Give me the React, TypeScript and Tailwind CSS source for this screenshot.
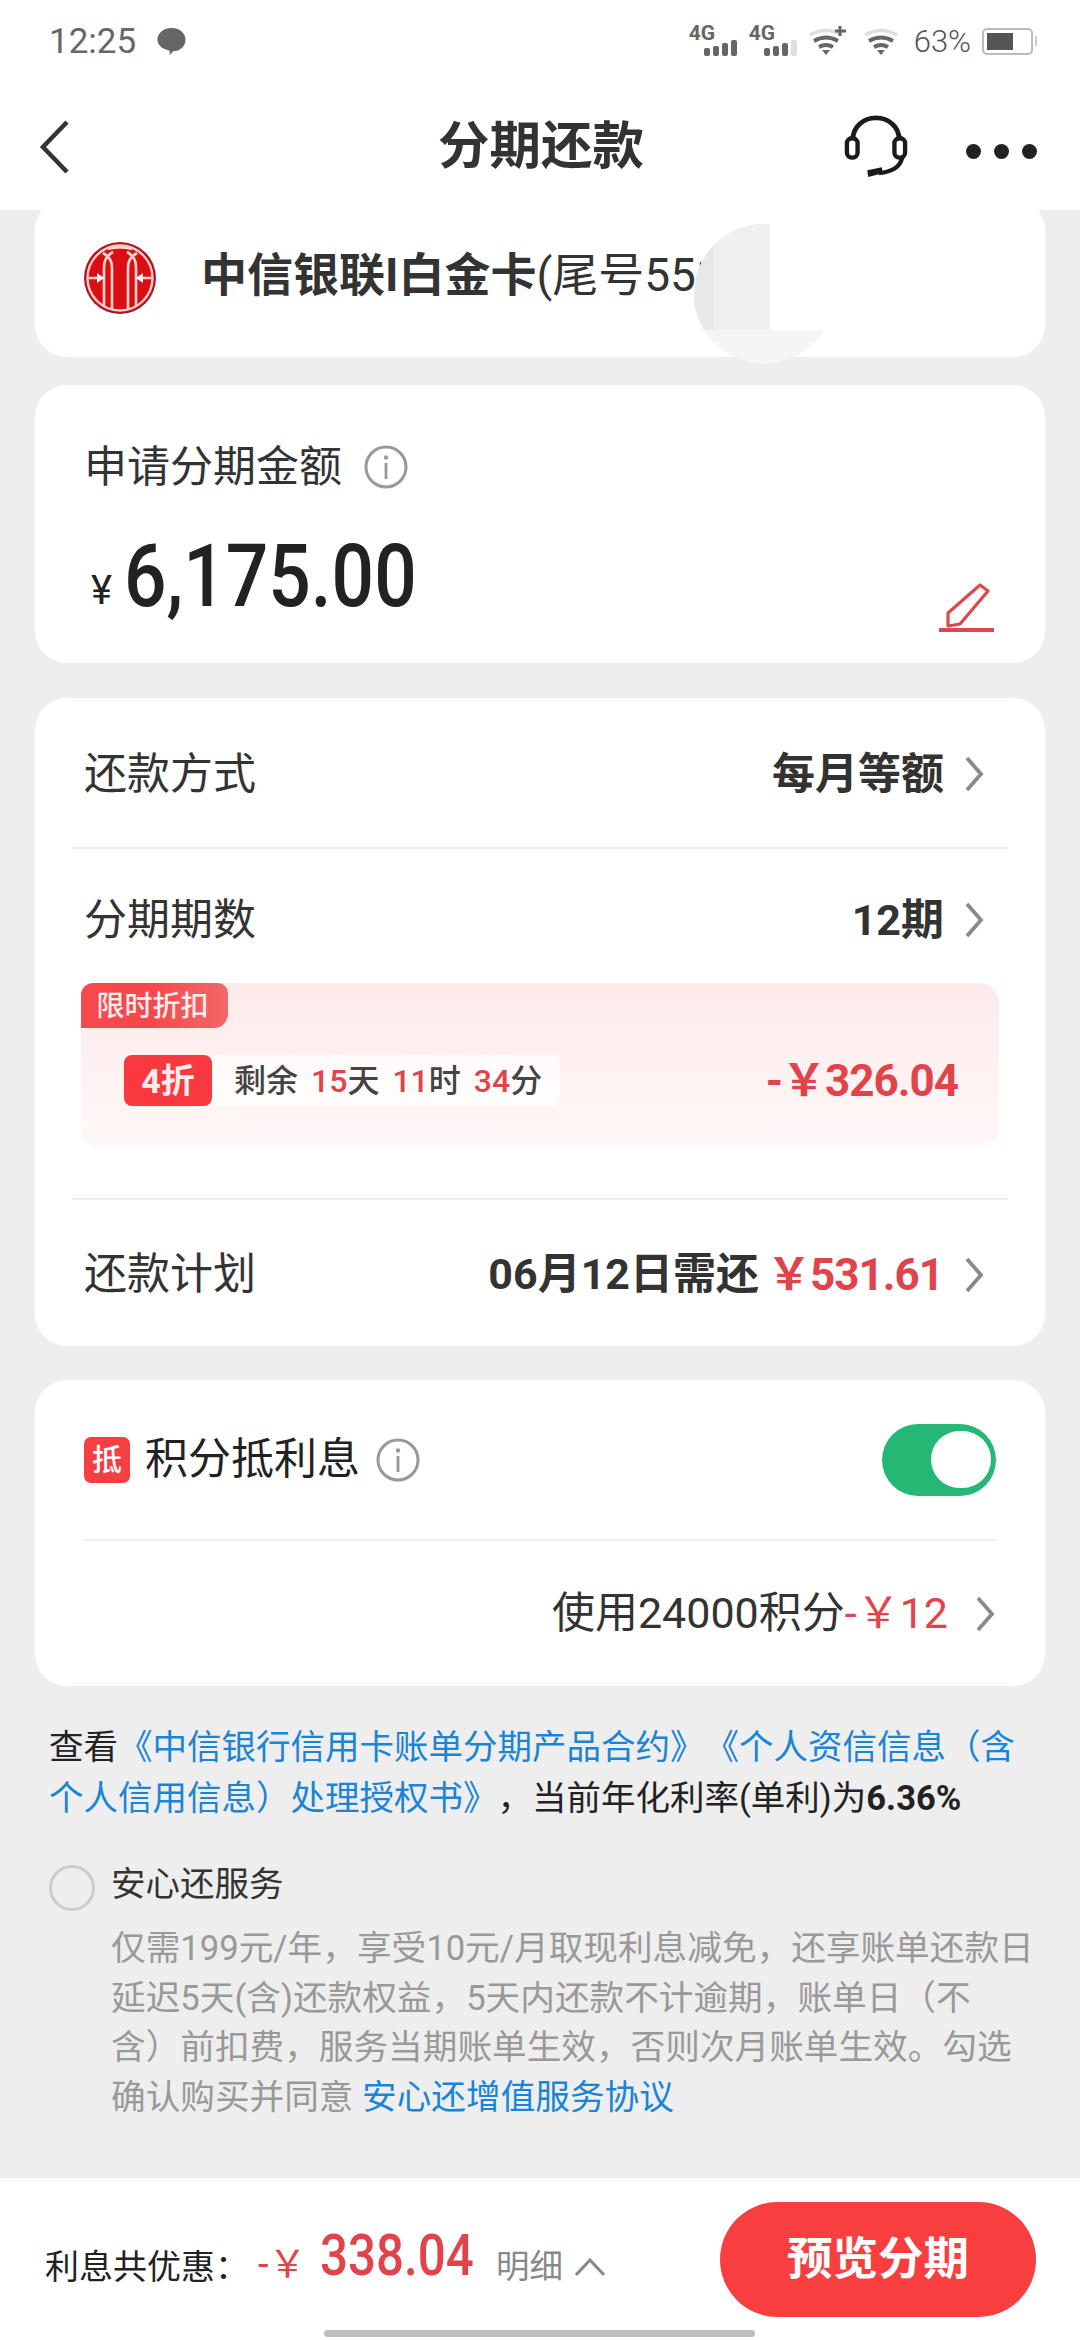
import React from "react";

const font = { fontFamily: '"Roboto","Noto Sans CJK SC",sans-serif' };

function Chevron({ className = "" }: { className?: string }) {
  return (
    <svg className={`shrink-0 ${className}`} width="21" height="36" viewBox="0 0 21 36" fill="none">
      <path d="M3 2l14 16L3 34" stroke="#8a8a8a" strokeWidth="3.8" />
    </svg>
  );
}

function Info({ className = "" }: { className?: string }) {
  return (
    <svg className={`shrink-0 ${className}`} width="44" height="44" viewBox="0 0 44 44" fill="none">
      <circle cx="22" cy="22" r="20" stroke="#999" strokeWidth="3" />
      <circle cx="22" cy="12.5" r="2.2" fill="#999" />
      <rect x="20.6" y="18" width="2.8" height="16" fill="#999" />
    </svg>
  );
}

function Logo() {
  return (
    <svg className="shrink-0" width="72" height="72" viewBox="0 0 72 72" fill="none">
      <circle cx="36" cy="36" r="36" fill="#b3141b" />
      <circle cx="36" cy="36" r="32.5" fill="#d90f14" stroke="#f8cfc8" strokeWidth="2.4" />
      <path d="M20 65V25q0-10 9-15M28 67V25q0-9-9-14M44 67V25q0-9 9-14M52 65V25q0-10-9-15M24 7q12-3 24 0" stroke="#fbd5ce" strokeWidth="2.6" />
      <path d="M13 31l7 5-7 5zM59 31l-7 5 7 5z" fill="#fff" />
      <path d="M5 36h9M58 36h9" stroke="#fbd5ce" strokeWidth="2.4" />
    </svg>
  );
}

function Cell({ lastDim }: { lastDim?: boolean }) {
  return (
    <div className="relative h-[30px] w-[48px] shrink-0">
      <span className="absolute left-0 top-[-3px] text-[21px] font-bold leading-[21px] text-[#666]">4G</span>
      <div className="absolute bottom-0 right-0 flex items-end gap-[3px]">
        <i className="block h-[8px] w-[6px] rounded-[2px] bg-[#666]" />
        <i className="block h-[10px] w-[6px] rounded-[2px] bg-[#666]" />
        <i className="block h-[13px] w-[6px] rounded-[2px] bg-[#666]" />
        <i className={`block h-[16px] w-[6px] rounded-[2px] ${lastDim ? "bg-[#ddd]" : "bg-[#666]"}`} />
      </div>
    </div>
  );
}

function Wifi({ plus }: { plus?: boolean }) {
  return (
    <svg className="shrink-0" width={plus ? 37 : 34} height="30" viewBox={plus ? "0 0 37 30" : "0 0 34 30"} fill="none">
      <path d="M1 9q16-9 32 0" stroke="#ddd" strokeWidth="3.5" />
      <path d="M5 15q12-7 24 0" stroke="#666" strokeWidth="3.8" />
      <path d="M10 21q7-4 14 0" stroke="#666" strokeWidth="3.8" />
      <path d="M13 24h8l-4 5z" fill="#666" />
      {plus && <path d="M31 0v10M26 5h11" stroke="#666" strokeWidth="3" />}
    </svg>
  );
}

export default function App() {
  return (
    <div className="relative flex h-[2340px] w-[1080px] flex-col overflow-hidden bg-[#eeeeee] [text-spacing-trim:space-all]" style={font}>
      <header className="relative z-10 h-[210px] shrink-0 bg-white">
        <div className="flex h-[82px] items-center justify-between pl-[49px] pr-[47px]">
          <div className="flex items-center gap-[20px]">
            <span className="text-[35px] leading-none text-[#666]">12:25</span>
            <svg width="31" height="30" viewBox="0 0 32 32"><path d="M16 2c8 0 15 5 15 12.500S25 27 18 27l-4 4v-4.500C7 25 1 21 1 14.500 1 7 8 2 16 2z" fill="#666" /></svg>
          </div>
          <div className="flex items-center">
            <Cell />
            <div className="ml-[12px]"><Cell lastDim /></div>
            <div className="ml-[12px] flex"><Wifi plus /></div>
            <div className="ml-[18px] flex"><Wifi /></div>
            <span className="ml-[16px] text-[31px] font-light leading-none text-[#555]">63%</span>
            <div className="relative ml-[11px] flex h-[27px] w-[51px] items-center rounded-[5px] border-2 border-[#bbb] pl-[3px]">
              <i className="block h-[17px] w-[26px] bg-[#555]" />
              <i className="absolute right-[-6px] top-[6px] block h-[10px] w-[2px] bg-[#ccc]" />
            </div>
          </div>
        </div>
        <div className="relative flex h-[128px] items-center justify-between pl-[39px] pr-[43px] pt-[2px]">
          <svg width="32" height="54" viewBox="0 0 32 54" fill="none"><path d="M28 2L4 27l24 25" stroke="#333" strokeWidth="4.500" /></svg>
          <h1 className="absolute left-[438px] text-[51.500px] font-bold leading-none text-[#333]">分期还款</h1>
          <div className="flex items-center gap-[58px]">
            <svg width="64" height="64" viewBox="0 0 66 66" fill="none">
              <path d="M9 26C9 12 20 3 33 3s24 9 24 23" stroke="#1b1b1b" strokeWidth="5" />
              <rect x="3" y="24" width="11" height="20" rx="5" stroke="#1b1b1b" strokeWidth="4.500" />
              <rect x="52" y="24" width="11" height="20" rx="5" stroke="#1b1b1b" strokeWidth="4.500" />
              <path d="M60 44q-3 14-24 16" stroke="#1b1b1b" strokeWidth="4.500" />
              <path d="M24 57l15-3 1 6-15 4z" fill="#1b1b1b" />
            </svg>
            <div className="flex gap-[13px] pt-[8px]">
              <i className="block h-[15px] w-[15px] rounded-full bg-[#222]" />
              <i className="block h-[15px] w-[15px] rounded-full bg-[#222]" />
              <i className="block h-[15px] w-[15px] rounded-full bg-[#222]" />
            </div>
          </div>
        </div>
      </header>

      <main className="flex flex-1 flex-col px-[35px]">
        <section className="relative -mt-[12px] flex h-[159px] shrink-0 items-center overflow-hidden rounded-[32px] bg-white pl-[49px]">
          <Logo />
          <div className="mb-[6px] ml-[45px] whitespace-nowrap text-[46px] leading-none text-[#333]">
            <b>中信银联I白金卡</b>(尾号551
          </div>
        </section>

        <section className="mt-[28px] flex h-[278px] shrink-0 flex-col rounded-[32px] bg-white pl-[49px] pr-[50px] pt-[60px]">
          <div className="flex items-center gap-[22px]">
            <span className="text-[43px] leading-none text-[#333]">申请分期金额</span>
            <Info />
          </div>
          <div className="mt-[44px] flex items-end justify-between">
            <div className="flex items-end">
              <span className="mb-[9px] ml-[7px] mr-[8px] w-[25px] text-[40px] leading-none text-[#222]">¥</span>
              <span className="w-[286px] origin-left scale-x-[0.86] whitespace-nowrap text-[87px] font-medium leading-none text-[#222]">6,175.00</span>
            </div>
            <svg className="mb-[-13px] shrink-0" width="56" height="50" viewBox="0 0 56 50" fill="none">
              <path d="M41 2l8 6-28 33-12 2V30z" stroke="#e0474c" strokeWidth="3.200" strokeLinejoin="round" />
              <path d="M0 47h55" stroke="#e0474c" strokeWidth="4" />
            </svg>
          </div>
        </section>

        <section className="mt-[35px] flex h-[648px] shrink-0 flex-col rounded-[32px] bg-white px-[37px]">
          <div className="flex h-[149px] shrink-0 items-center justify-between pl-[12px] pr-[23px] pt-[3px]">
            <span className="text-[43px] leading-none text-[#333]">还款方式</span>
            <div className="flex items-center">
              <b className="text-[43px] leading-none text-[#333]">每月等额</b>
              <Chevron className="ml-[20px]" />
            </div>
          </div>
          <div className="h-[2px] shrink-0 bg-[#eee]" />
          <div className="flex h-[134px] shrink-0 items-center justify-between pl-[12px] pr-[23px] pt-[8px]">
            <span className="text-[43px] leading-none text-[#333]">分期期数</span>
            <div className="flex items-center">
              <b className="text-[43px] leading-none text-[#333]">12期</b>
              <Chevron className="ml-[20px]" />
            </div>
          </div>
          <div className="mx-[9px] h-[164px] shrink-0 rounded-[20px] bg-gradient-to-b from-[#fdeaea] to-[#fff8f8]">
            <div className="flex h-[45px] w-[147px] items-center justify-center rounded-tl-[12px] rounded-tr-[10px] rounded-br-[14px] bg-gradient-to-r from-[#f7484c] via-[#f6484c] to-[#f2686a] pr-[4px] pt-[3px] text-[28px] font-medium leading-none text-white/90">
              限时折扣
            </div>
            <div className="flex items-center justify-between pl-[43px] pr-[41px] pt-[27px]">
              <div className="flex items-center rounded-[8px] bg-white/70">
                <span className="flex h-[51px] w-[88px] items-center justify-center rounded-[8px] bg-[#f9383f] text-[34px] font-bold leading-none text-white/90">4折</span>
                <span className="flex h-[51px] items-center gap-[13px] pl-[22px] pr-[18px] text-[32px] font-medium leading-none text-[#444]">
                  <span>剩余</span>
                  <span><span className="text-[#e0444a]">15</span>天</span>
                  <span><span className="text-[#e0444a]">11</span>时</span>
                  <span><span className="text-[#e0444a]">34</span>分</span>
                </span>
              </div>
              <b className="text-[44px] leading-none tracking-[-1px] text-[#e0444a]">-￥326.04</b>
            </div>
          </div>
          <div className="mt-[51px] h-[2px] shrink-0 bg-[#eee]" />
          <div className="flex h-[146px] shrink-0 items-center justify-between pl-[12px] pr-[23px] pt-[3px]">
            <span className="text-[43px] leading-none text-[#333]">还款计划</span>
            <div className="flex items-center">
              <b className="text-[43px] leading-none text-[#333]">06月12日需还</b>
              <b className="ml-[8px] text-[44px] leading-none tracking-[-1px] text-[#e0444a]">￥531.61</b>
              <Chevron className="ml-[21px]" />
            </div>
          </div>
        </section>

        <section className="mt-[34px] flex h-[306px] shrink-0 flex-col rounded-[32px] bg-white px-[49px]">
          <div className="flex h-[159px] shrink-0 items-center justify-between">
            <div className="flex items-center">
              <span className="flex h-[46px] w-[46px] items-center justify-center rounded-[7px] bg-[#f73e42] text-[30px] font-medium leading-none text-white">抵</span>
              <span className="ml-[15px] text-[43px] leading-none text-[#222]">积分抵利息</span>
              <Info className="ml-[16px]" />
            </div>
            <div className="flex h-[72px] w-[114px] items-center justify-end rounded-full bg-[#24b874] pr-[5px]">
              <i className="block h-[57px] w-[60px] rounded-full bg-white" />
            </div>
          </div>
          <div className="h-[2px] shrink-0 bg-[#eee]" />
          <div className="flex flex-1 items-center justify-end text-[43px] leading-none text-[#333]">
            使用24000积分<span className="text-[#e0444a]">-￥12</span>
            <Chevron className="ml-[27px]" />
          </div>
        </section>

        <p className="mt-[36px] pl-[14px] pr-[10px] text-[34.5px] leading-[51px] text-[#222]">
          查看<span className="text-[#1a84d6]">《中信银行信用卡账单分期产品合约》《个人资信信息（含个人信用信息）处理授权书》</span>，当前年化利率(单利)为<b>6.36%</b>
        </p>

        <div className="mt-[35px] flex pl-[14px]">
          <i className="mt-[6px] block h-[46px] w-[46px] shrink-0 rounded-full border-[3px] border-[#ccc]" />
          <div className="ml-[16px] flex-1">
            <div className="text-[34.5px] leading-[50px] text-[#333]">安心还服务</div>
            <p className="mt-[15px] whitespace-nowrap text-[34.65px] leading-[49.7px] text-[#999]">
              仅需199元/年，享受10元/月取现利息减免，还享账单还款日<br />
              延迟5天(含)还款权益，5天内还款不计逾期，账单日（不<br />
              含）前扣费，服务当期账单生效，否则次月账单生效。勾选<br />
              确认购买并同意 <span className="text-[#1a84d6]">安心还增值服务协议</span>
            </p>
          </div>
        </div>
      </main>

      <div className="absolute left-[694px] top-[224px] h-[140px] w-[140px] overflow-hidden rounded-full bg-[#f5f5f5]">
        <div className="flex h-[106px] w-full">
          <i className="block h-full w-[20px] bg-[#e8e8e8]" />
          <i className="block h-full w-[56px] bg-[#f0f0f0]" />
          <i className="block h-full flex-1 bg-white" />
        </div>
      </div>

      <footer className="absolute bottom-0 left-0 flex h-[162px] w-full items-start justify-between bg-white pl-[45px] pr-[44px] pt-[24px]">
        <div className="flex h-[115px] items-center pt-[14px]">
          <span className="w-[213px] text-[34px] leading-none text-[#222]">利息共优惠：</span>
          <span className="w-[62px] -translate-y-[3px] text-[38px] leading-none text-[#e0444a]">-￥</span>
          <b className="w-[152px] origin-left -translate-y-[12px] scale-x-[0.85] whitespace-nowrap text-[58px] font-medium leading-none text-[#e0444a]">338.04</b>
          <span className="ml-[24px] text-[33.500px] leading-none text-[#888]">明细</span>
          <svg className="ml-[12px]" width="30" height="18" viewBox="0 0 30 18" fill="none"><path d="M1 17L15 2l14 15" stroke="#888" strokeWidth="3" /></svg>
        </div>
        <div className="flex h-[115px] w-[316px] items-center justify-center rounded-full bg-[#f93e40] text-[45.500px] font-bold leading-none text-white">预览分期</div>
        <i className="absolute bottom-[3px] left-[324px] block h-[7px] w-[431px] rounded-full bg-[#bdbdbd]" />
      </footer>
    </div>
  );
}
